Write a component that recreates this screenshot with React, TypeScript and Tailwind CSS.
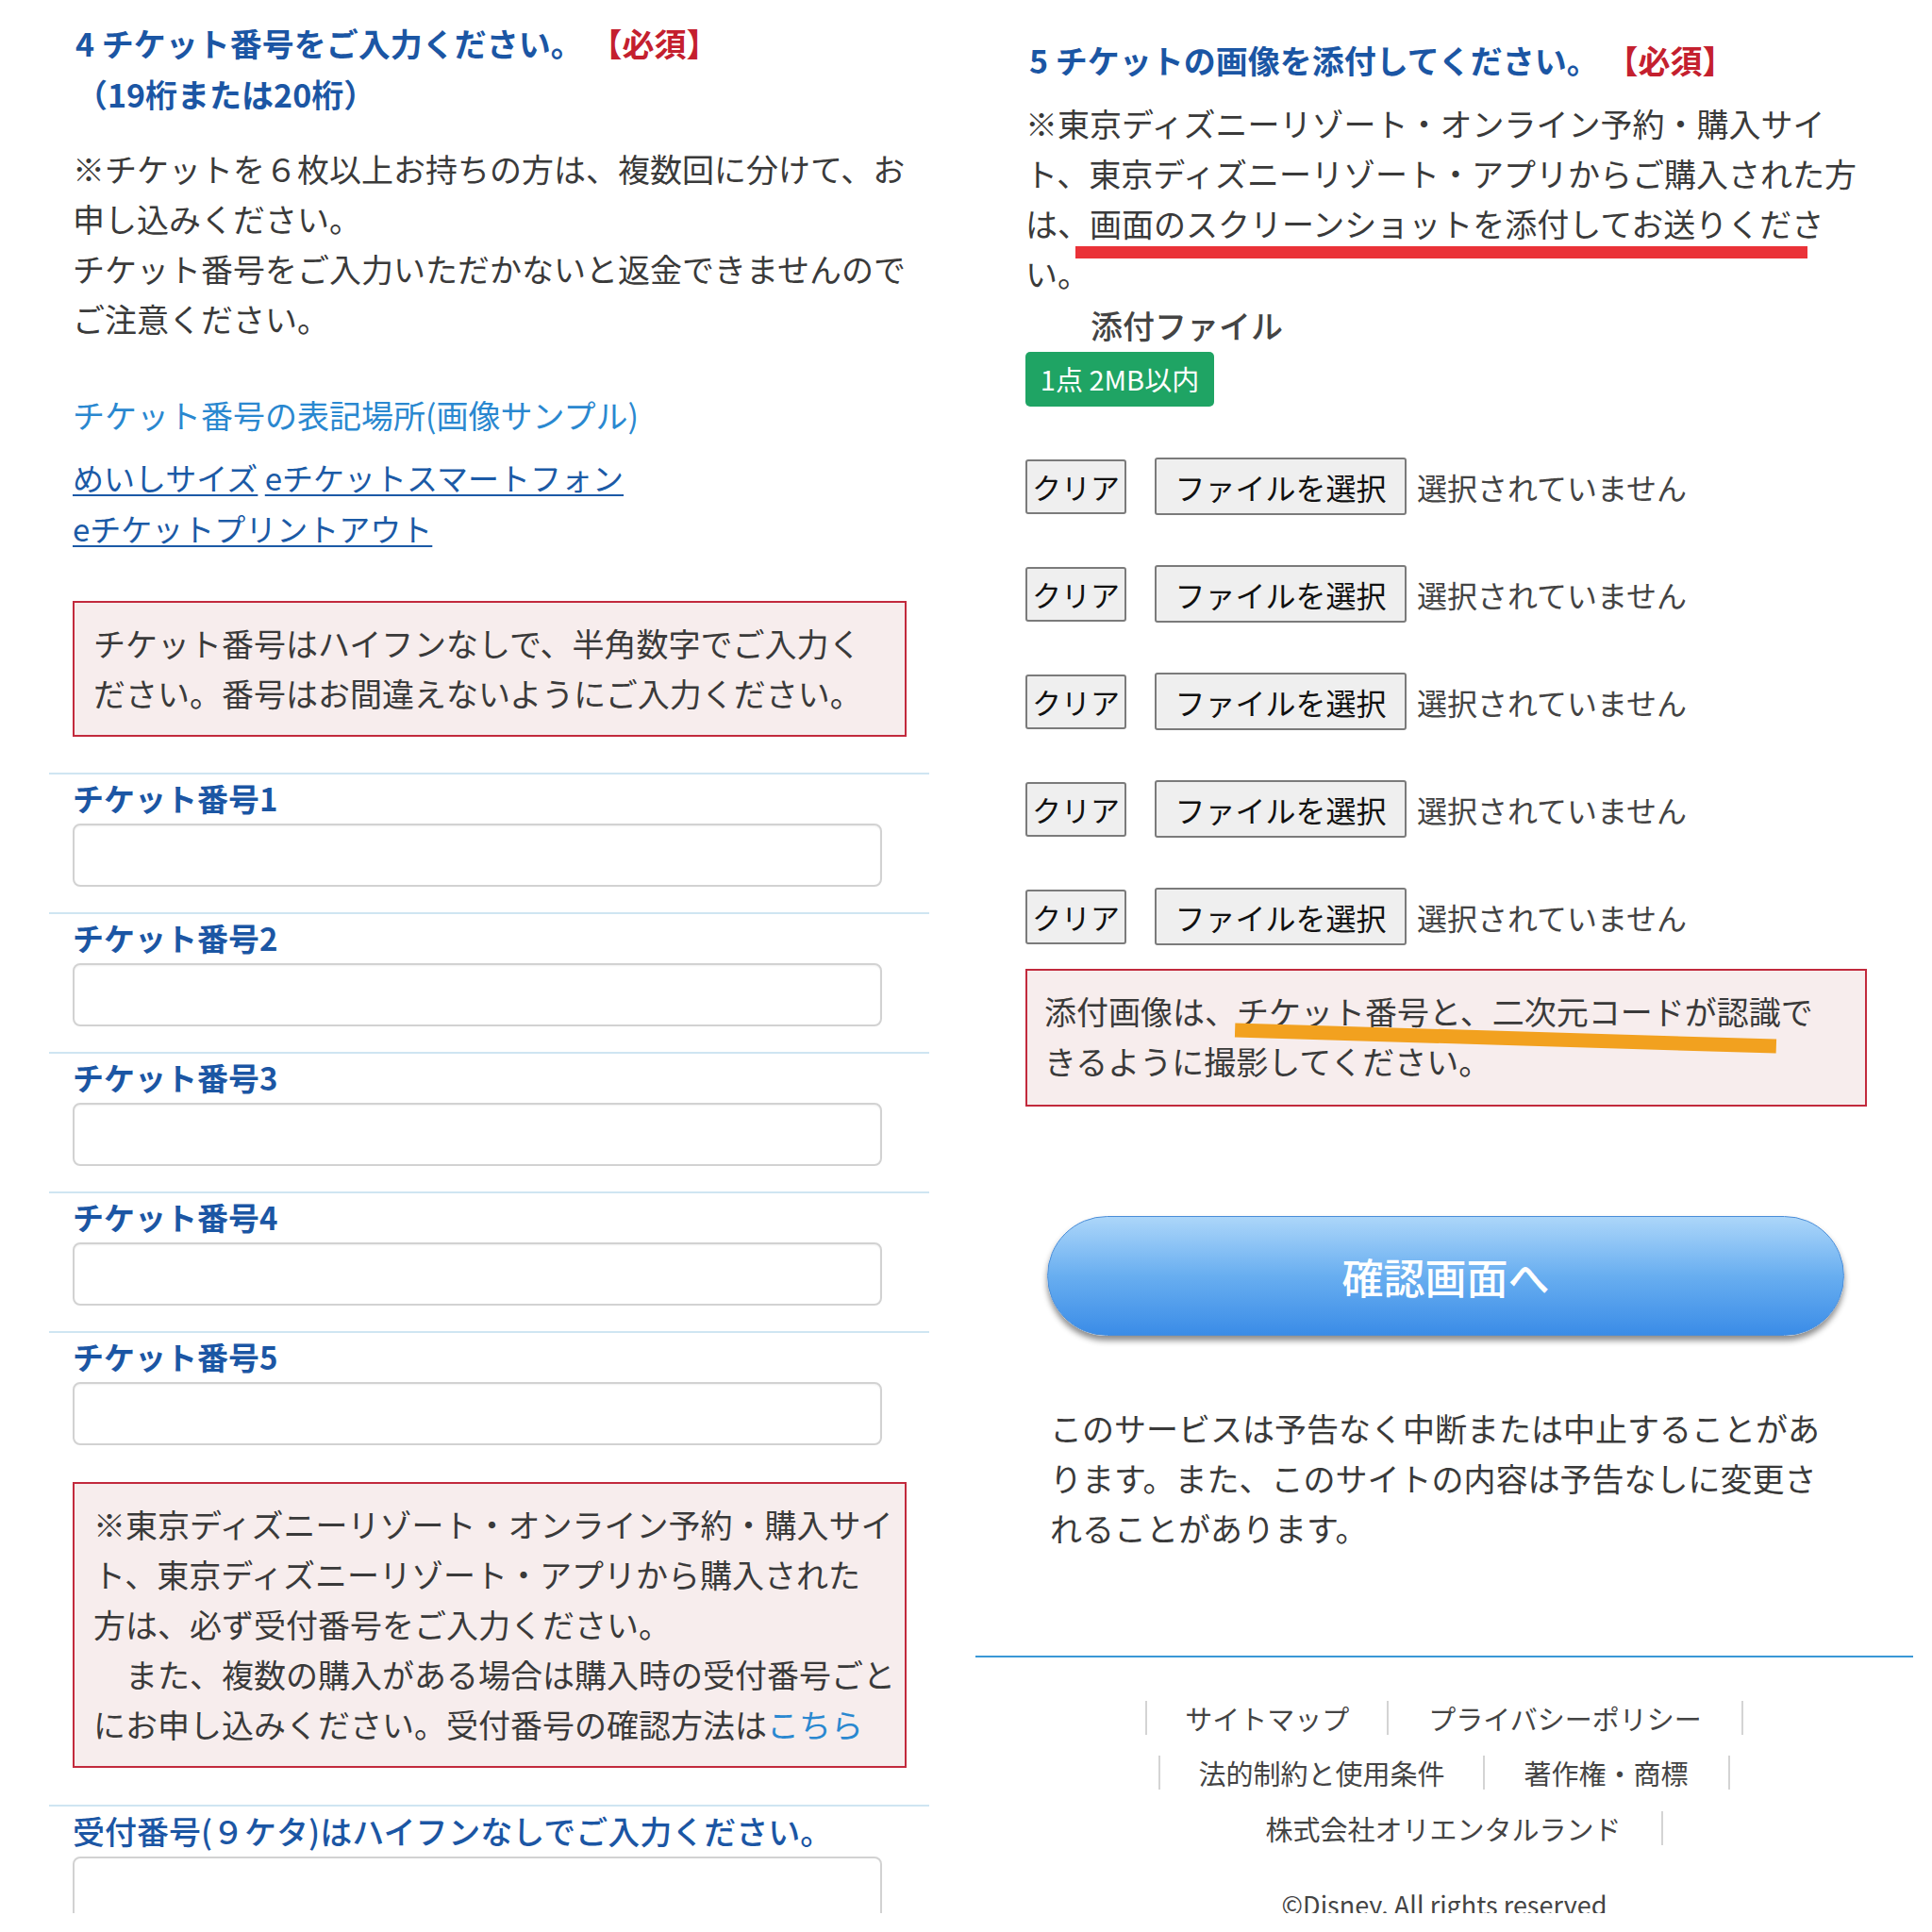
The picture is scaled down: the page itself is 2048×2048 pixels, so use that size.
import React from "react";

const Required = () => <span className="text-[#c4202e]">【必須】</span>;

const TicketRow = ({ label }: { label: string }) => (
  <div className="ml-[52px] w-[933px] border-t-2 border-[#cfe5f2] pl-[25px] pt-[5px] pb-[27px]">
    <div className="text-[33px] leading-[40px] font-bold text-[#1b56a4]">{label}</div>
    <input
      type="text"
      className="mt-[7px] block w-[858px] h-[67px] rounded-[8px] border-2 border-[#d2d2d2] bg-white shadow-[inset_0_1px_2px_rgba(0,0,0,0.06)]"
    />
  </div>
);

const FileRow = () => (
  <div className="flex items-center h-[61px]">
    <button className="w-[107px] h-[58px] border-2 border-[#7b7b7b] bg-[#efefef] rounded-[3px] text-[31px] leading-none text-[#111]">
      クリア
    </button>
    <button className="ml-[30px] w-[267px] h-[61px] border-2 border-[#7b7b7b] bg-[#efefef] rounded-[3px] text-[32px] leading-none text-[#111]">
      ファイルを選択
    </button>
    <span className="ml-[11px] text-[32px] text-[#444]">選択されていません</span>
  </div>
);

export default function App() {
  return (
    <div className="w-[2048px] h-[2048px] bg-white font-['Noto_Sans_CJK_JP','Noto_Sans',sans-serif] text-[#3a3a3a]">
      <div className="flex h-[2028px] overflow-hidden">
        {/* left screenshot */}
        <div className="w-[1034px] shrink-0 pt-[19px] whitespace-nowrap">
          <div className="ml-[77px]">
            <h2 className="pl-[3px] text-[34px] leading-[54px] font-bold text-[#1b56a4]">
              4 チケット番号をご入力ください。 <Required />
              <br />
              （19桁または20桁）
            </h2>
            <p className="mt-[25px] text-[34px] leading-[53px]">
              ※チケットを６枚以上お持ちの方は、複数回に分けて、お
              <br />
              申し込みください。
              <br />
              チケット番号をご入力いただかないと返金できませんので
              <br />
              ご注意ください。
            </p>
            <div className="mt-[49px] text-[34px] leading-[53px] text-[#2a88d0]">
              チケット番号の表記場所(画像サンプル)
            </div>
            <div className="mt-[13px] text-[33px] leading-[54px] text-[#1b5aa6]">
              <a className="underline decoration-2 underline-offset-[4px]">めいしサイズ</a>{" "}
              <a className="underline decoration-2 underline-offset-[4px]">eチケットスマートフォン</a>
              <br />
              <a className="underline decoration-2 underline-offset-[4px]">eチケットプリントアウト</a>
            </div>
            <div className="mt-[50px] w-[884px] border-2 border-[#c22a3d] bg-[#f7eded] pl-[20px] pt-[16px] pb-[18px] text-[34px] leading-[53px]">
              チケット番号はハイフンなしで、半角数字でご入力く
              <br />
              ださい。番号はお間違えないようにご入力ください。
            </div>
          </div>

          <div className="mt-[38px]">
            <TicketRow label="チケット番号1" />
            <TicketRow label="チケット番号2" />
            <TicketRow label="チケット番号3" />
            <TicketRow label="チケット番号4" />
            <TicketRow label="チケット番号5" />
          </div>

          <div className="ml-[77px] mt-[12px] w-[884px] border-2 border-[#c22a3d] bg-[#f7eded] pl-[20px] pt-[16px] pb-[18px] text-[34px] leading-[53px]">
            ※東京ディズニーリゾート・オンライン予約・購入サイ
            <br />
            ト、東京ディズニーリゾート・アプリから購入された
            <br />
            方は、必ず受付番号をご入力ください。
            <br />
            {"　また、複数の購入がある場合は購入時の受付番号ごと"}
            <br />
            にお申し込みください。受付番号の確認方法は
            <a className="text-[#2a88d0]">こちら</a>
          </div>

          <div className="mt-[39px] ml-[52px] w-[933px] border-t-2 border-[#cfe5f2] pl-[25px] pt-[6px]">
            <div className="text-[34px] leading-[40px] font-medium text-[#1b56a4]">
              受付番号(９ケタ)はハイフンなしでご入力ください。
            </div>
            <input
              type="text"
              className="mt-[7px] block w-[858px] h-[90px] rounded-[8px] border-2 border-[#d2d2d2] bg-white"
            />
          </div>
        </div>

        {/* right screenshot */}
        <div className="flex-1 pt-[37px] pl-[53px] whitespace-nowrap">
          <h2 className="pl-[4px] text-[34px] leading-[54px] font-bold text-[#1b56a4]">
            5 チケットの画像を添付してください。 <Required />
          </h2>
          <div className="relative mt-[13px] text-[34px] leading-[53px]">
            ※東京ディズニーリゾート・オンライン予約・購入サイ
            <br />
            ト、東京ディズニーリゾート・アプリからご購入された方
            <br />
            は、画面のスクリーンショットを添付してお送りくださ
            <br />
            い。
            <div className="absolute left-[53px] top-[157px] w-[776px] h-[13px] bg-[#ea3238]" />
          </div>
          <div className="mt-[2px] pl-[69px] text-[34px] leading-[53px] font-medium text-[#444]">
            添付ファイル
          </div>
          <div className="mt-[2px] flex items-center justify-center w-[200px] h-[58px] rounded-[5px] bg-[#1fa464] text-[29px] text-white">
            1点 2MB以内
          </div>

          <div className="mt-[54px] flex flex-col gap-[53px]">
            <FileRow />
            <FileRow />
            <FileRow />
            <FileRow />
            <FileRow />
          </div>

          <div className="relative mt-[25px] w-[892px] border-2 border-[#c22a3d] bg-[#f7eded] pl-[18px] pt-[16px] pb-[20px] text-[34px] leading-[53px]">
            添付画像は、チケット番号と、二次元コードが認識で
            <br />
            きるように撮影してください。
            <div className="absolute left-[220px] top-[64px] w-[574px] h-[15px] bg-[#f2a11f] rotate-[1.7deg]" />
          </div>

          <button className="mt-[116px] ml-[23px] w-[845px] h-[127px] rounded-full border border-[#4a8dd8] bg-linear-to-b from-[#acd6f9] via-[#68aef0] to-[#3a8ce7] shadow-[0_5px_6px_rgba(0,0,0,0.45)] text-[44px] font-medium text-white">
            確認画面へ
          </button>

          <p className="mt-[71px] pl-[26px] text-[34px] leading-[53px]">
            このサービスは予告なく中断または中止することがあ
            <br />
            ります。また、このサイトの内容は予告なしに変更さ
            <br />
            れることがあります。
          </p>

          <div className="-ml-[53px] w-[994px] mt-[109px]">
            <div className="h-[2px] bg-[#3a98d6]" />
            <div className="mt-[46px] flex justify-center text-[29px] leading-[36px] text-[#444]">
              <span className="px-[40px] border-x-2 border-[#d4d4d4]">サイトマップ</span>
              <span className="px-[42px] border-r-2 border-[#d4d4d4]">プライバシーポリシー</span>
            </div>
            <div className="mt-[22px] flex justify-center text-[29px] leading-[36px] text-[#444]">
              <span className="px-[40px] border-x-2 border-[#d4d4d4]">法的制約と使用条件</span>
              <span className="px-[42px] border-r-2 border-[#d4d4d4]">著作権・商標</span>
            </div>
            <div className="mt-[23px] flex justify-center text-[29px] leading-[36px] text-[#444]">
              <span className="px-[42px] border-r-2 border-[#d4d4d4]">株式会社オリエンタルランド</span>
            </div>
            <div className="mt-[45px] text-center text-[27px] leading-[36px] text-[#444]">
              ©Disney. All rights reserved
            </div>
          </div>
        </div>
      </div>
    </div>
  );
}
